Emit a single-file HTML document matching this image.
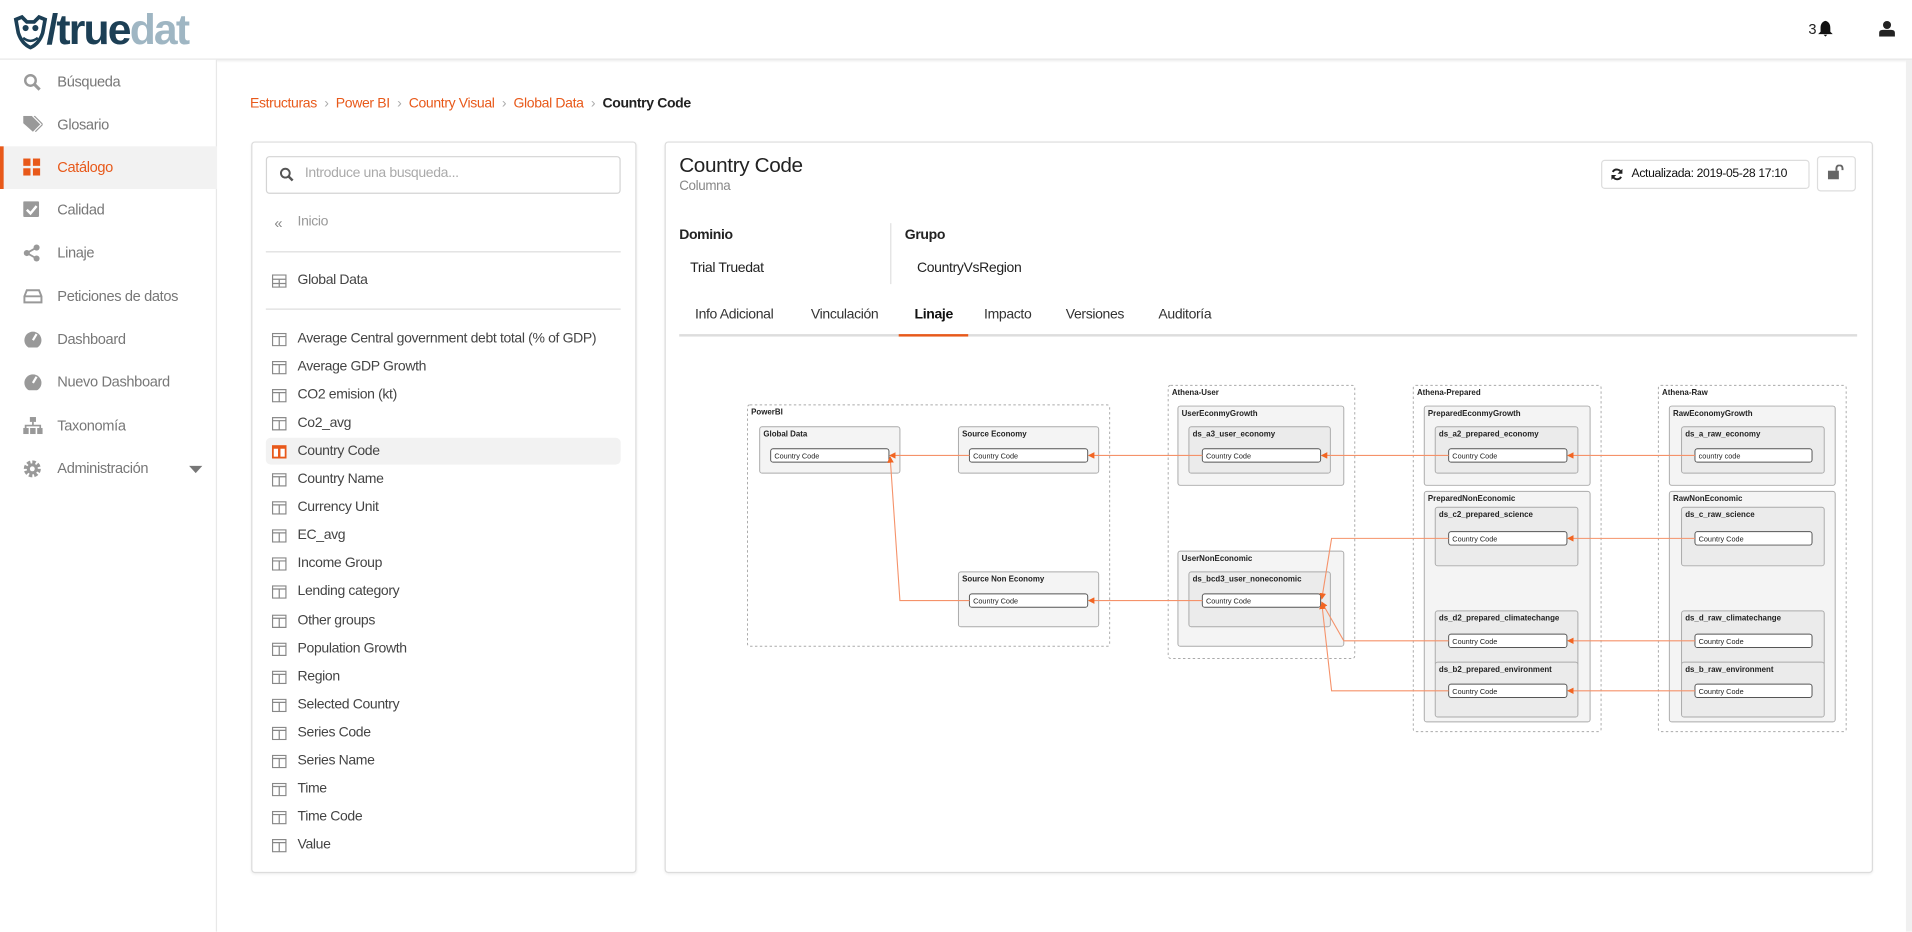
<!DOCTYPE html>
<html><head><meta charset="utf-8"><style>
*{box-sizing:border-box;margin:0;padding:0}
html,body{width:1912px;height:931px;overflow:hidden;background:#fff;font-family:"Liberation Sans",sans-serif}
#w{position:absolute;left:0;top:0;width:1568px;height:763.5px;transform:scale(1.2194);transform-origin:0 0;letter-spacing:-.3px}
.a{position:absolute;white-space:nowrap}
.hdr{left:0;top:0;width:1568px;height:49px;background:#fff;border-bottom:1px solid #e6e6e6;box-shadow:0 1px 2px rgba(0,0,0,.08)}
.side{left:0;top:49px;width:178px;height:715px;border-right:1px solid #e8e8e8;background:#fff}
.si{position:absolute;left:0;width:178px;height:35px;font-size:12px;color:#777;line-height:35px;padding-left:47px}
.si svg{position:absolute;left:19px;top:10px}
.si.act{background:#f2f2f2;color:#e8591a;border-left:3px solid #e8591a;padding-left:44px}
.si.act svg{left:16px}
.bc{left:205px;top:79px;font-size:11.5px;color:#e8591a}
.bc span.s{color:#aaa;margin:0 6px}
.bc b{color:#222;font-weight:bold}
.panel{border:1px solid #dcdcdc;border-radius:3px;background:#fff;box-shadow:0 1px 2px rgba(0,0,0,.06)}
.li{position:absolute;left:218px;width:291px;height:22px;font-size:11.5px;color:#444;line-height:22px;padding-left:26px;white-space:nowrap}
.li svg{position:absolute;left:5px;top:6px}
.li.act{background:#f2f2f2;border-radius:4px}
.tab{position:absolute;top:252px;font-size:11.5px;color:#333}
</style></head><body><div id="w">
<div class="a hdr"></div>
<svg class="a" style="left:10px;top:11px" width="30" height="30" viewBox="0 0 30 30"><path d="M3 5 L8 3 L12 7 L18 7 L22 3 L27 5 L25 16 Q22 25 15 28 Q8 25 5 16 Z" fill="none" stroke="#1c3f55" stroke-width="3"/><circle cx="11" cy="12" r="2.5" fill="#1c3f55"/><circle cx="19" cy="12" r="2.5" fill="#1c3f55"/><path d="M9 20 Q15 25 21 20" stroke="#1c3f55" stroke-width="2" fill="none"/></svg>
<div class="a" style="left:38px;top:6px;font-size:35px;font-weight:bold;letter-spacing:-1.5px;color:#1c3f55;line-height:38px">/true<span style="color:#9fb6c3">dat</span></div>
<div class="a" style="left:1483px;top:17px;font-size:12px;color:#222">3</div>
<svg class="a" style="left:1491px;top:17px" width="12" height="13" viewBox="0 0 12 13"><path d="M6 0 C9 1 10 3 10 6 L10 9 L12 11 L0 11 L2 9 L2 6 C2 3 3 1 6 0Z M4.5 11.5 L7.5 11.5 L6 13Z" fill="#111"/></svg>
<svg class="a" style="left:1541px;top:17px" width="13" height="13" viewBox="0 0 13 13"><circle cx="6.5" cy="3.5" r="3.3" fill="#222"/><path d="M0 13 L0 10 Q0 7.5 3 7.5 L10 7.5 Q13 7.5 13 10 L13 13Z" fill="#222"/></svg>
<div class="a" style="left:1563px;top:49px;width:5px;height:715px;background:#f0f0f0"></div>

<div class="a side">
<div class="si" style="top:1px"><svg width="15" height="15" viewBox="0 0 15 15"><circle cx="6" cy="6" r="4.3" stroke="#999" stroke-width="2" fill="none"/><path d="M9 9 L13.5 13.5" stroke="#999" stroke-width="2.5"/></svg>Búsqueda</div>
<div class="si" style="top:36px"><svg width="16" height="15" viewBox="0 0 16 15"><path d="M0 0 L7 0 L14 7 L8 13 L0 6Z" fill="#999"/><path d="M9 0 L16 7 L10 13" stroke="#999" fill="none"/></svg>Glosario</div>
<div class="si act" style="top:71px"><svg width="14" height="14" viewBox="0 0 14 14" fill="#e8591a"><rect width="6" height="6"/><rect x="8" width="6" height="6"/><rect y="8" width="6" height="6"/><rect x="8" y="8" width="6" height="6"/></svg>Catálogo</div>
<div class="si" style="top:106px"><svg width="14" height="14" viewBox="0 0 14 14"><rect width="13" height="13" rx="1" fill="#999"/><path d="M3 7 L6 10 L11 4" stroke="#fff" stroke-width="2" fill="none"/></svg>Calidad</div>
<div class="si" style="top:141px"><svg width="14" height="15" viewBox="0 0 14 15" fill="#999"><circle cx="11" cy="3" r="2.5"/><circle cx="3" cy="7.5" r="2.5"/><circle cx="11" cy="12" r="2.5"/><path d="M11 3 L3 7.5 L11 12" stroke="#999" stroke-width="1.5" fill="none"/></svg>Linaje</div>
<div class="si" style="top:177px"><svg width="16" height="14" viewBox="0 0 16 14"><path d="M1 7 L3 2 L13 2 L15 7 L15 12 L1 12Z" stroke="#999" stroke-width="1.6" fill="none"/><path d="M1 7 L15 7" stroke="#999" stroke-width="1.5"/></svg>Peticiones de datos</div>
<div class="si" style="top:212px"><svg width="16" height="14" viewBox="0 0 16 14"><circle cx="8" cy="8" r="7" fill="#999"/><path d="M8 8 L11 3" stroke="#fff" stroke-width="1.8"/></svg>Dashboard</div>
<div class="si" style="top:247px"><svg width="16" height="14" viewBox="0 0 16 14"><circle cx="8" cy="8" r="7" fill="#999"/><path d="M8 8 L11 3" stroke="#fff" stroke-width="1.8"/></svg>Nuevo Dashboard</div>
<div class="si" style="top:283px"><svg width="16" height="14" viewBox="0 0 16 14" fill="#999"><rect x="5.5" y="0" width="5" height="4"/><rect x="0" y="9" width="4.5" height="5"/><rect x="5.7" y="9" width="4.5" height="5"/><rect x="11.5" y="9" width="4.5" height="5"/><path d="M8 4 V7 M2 9 V7 H14 V9" stroke="#999" stroke-width="1.4" fill="none"/></svg>Taxonomía</div>
<div class="si" style="top:318px"><svg width="15" height="15" viewBox="0 0 15 15"><circle cx="7.5" cy="7.5" r="5" fill="none" stroke="#999" stroke-width="4" stroke-dasharray="2.5 1.4"/><circle cx="7.5" cy="7.5" r="4.5" fill="#999"/><circle cx="7.5" cy="7.5" r="2" fill="#fff"/></svg>Administración<svg style="left:155px;top:15px" width="11" height="6" viewBox="0 0 11 6"><path d="M0 0 L11 0 L5.5 6Z" fill="#777"/></svg></div>
</div>

<div class="a bc">Estructuras<span class="s">›</span>Power BI<span class="s">›</span>Country Visual<span class="s">›</span>Global Data<span class="s">›</span><b>Country Code</b></div>

<div class="a panel" style="left:206px;top:116px;width:316px;height:600px"></div>
<div class="a" style="left:218px;top:128px;width:291px;height:31px;border:1px solid #d4d4d4;border-radius:3px"></div>
<svg class="a" style="left:229px;top:137px" width="12" height="12" viewBox="0 0 12 12"><circle cx="5" cy="5" r="3.6" stroke="#555" stroke-width="1.6" fill="none"/><path d="M7.5 7.5 L11 11" stroke="#555" stroke-width="2"/></svg>
<div class="a" style="left:250px;top:136px;font-size:11.5px;color:#aaa">Introduce una busqueda...</div>
<div class="a" style="left:225px;top:176px;font-size:12px;color:#888">«</div>
<div class="a" style="left:244px;top:176px;font-size:11.5px;color:#999">Inicio</div>
<div class="a" style="left:218px;top:206px;width:291px;height:1px;background:#ddd"></div>
<div class="li" style="top:219px"><svg width="12" height="11" viewBox="0 0 12 11"><rect x=".5" y=".5" width="11" height="10" fill="none" stroke="#888"/><path d="M.5 4 H11.5 M.5 7.5 H11.5 M6 4 V10.5" stroke="#888"/></svg>Global Data</div>
<div class="a" style="left:218px;top:253px;width:291px;height:1px;background:#ddd"></div>
<div id="list"></div>

<div class="a panel" style="left:545px;top:116px;width:991px;height:600px"></div>
<div class="a" style="left:557px;top:126px;font-size:17px;color:#222">Country Code</div>
<div class="a" style="left:557px;top:147px;font-size:11px;color:#888">Columna</div>
<div class="a" style="left:1313px;top:131px;width:171px;height:24px;border:1px solid #ddd;border-radius:3px;font-size:10px;color:#111;line-height:22px;padding-left:24px">Actualizada: 2019-05-28 17:10</div>
<svg class="a" style="left:1321px;top:138px" width="10" height="10" viewBox="0 0 10 10"><path d="M8.5 4 A3.7 3.7 0 0 0 1.6 3 M1.5 6 A3.7 3.7 0 0 0 8.4 7" stroke="#222" stroke-width="1.6" fill="none"/><path d="M9.5 0.5 V4.5 H5.5Z M0.5 9.5 V5.5 H4.5Z" fill="#222"/></svg>
<div class="a" style="left:1490px;top:128px;width:32px;height:29px;border:1px solid #ddd;border-radius:3px"></div>
<svg class="a" style="left:1499px;top:135px" width="14" height="13" viewBox="0 0 14 13"><rect x="0" y="5" width="9" height="7" fill="#666"/><path d="M7 5 V3 A2.5 2.5 0 0 1 12 3 V4.5" stroke="#666" stroke-width="1.6" fill="none"/></svg>
<div class="a" style="left:557px;top:187px;font-size:11.5px;font-weight:bold;color:#222">Dominio</div>
<div class="a" style="left:742px;top:187px;font-size:11.5px;font-weight:bold;color:#222">Grupo</div>
<div class="a" style="left:566px;top:214px;font-size:11.5px;color:#222">Trial Truedat</div>
<div class="a" style="left:752px;top:214px;font-size:11.5px;color:#222">CountryVsRegion</div>
<div class="a" style="left:730px;top:183px;width:1px;height:50px;background:#e0e0e0"></div>
<div class="tab" style="left:570px">Info Adicional</div>
<div class="tab" style="left:665px">Vinculación</div>
<div class="tab" style="left:750px;font-weight:bold;color:#111">Linaje</div>
<div class="tab" style="left:807px">Impacto</div>
<div class="tab" style="left:874px">Versiones</div>
<div class="tab" style="left:950px">Auditoría</div>
<div class="a" style="left:557px;top:274px;width:966px;height:2px;background:#ddd"></div>
<div class="a" style="left:737px;top:274px;width:57px;height:2px;background:#e8591a"></div>

<svg class="a" style="left:0;top:0;letter-spacing:0" width="1568" height="763" viewBox="0 0 1568 763" font-family="Liberation Sans, sans-serif">
<defs><marker id="ar" markerWidth="6" markerHeight="6" refX="5" refY="3" orient="auto"><path d="M0 0 L6 3 L0 6Z" fill="#f26522"/></marker></defs>
<g id="dg"></g>
</svg>
</div>
<script>
var L=["Average Central government debt total (% of GDP)","Average GDP Growth","CO2 emision (kt)","Co2_avg","Country Code","Country Name","Currency Unit","EC_avg","Income Group","Lending category","Other groups","Population Growth","Region","Selected Country","Series Code","Series Name","Time","Time Code","Value"];
var h="";L.forEach(function(t,i){var y=267+i*23.05;var c=i==4?"#e8591a":"#888";h+='<div class="li'+(i==4?' act':'')+'" style="top:'+y+'px"><svg width="12" height="11" viewBox="0 0 12 11"><rect x=".5" y=".5" width="11" height="10" fill="'+(i==4?'#e8591a':'none')+'" stroke="'+c+'"/><rect x="1.5" y="3" width="3.5" height="6.5" fill="#fff" opacity="'+(i==4?1:0)+'"/><rect x="7" y="3" width="3.5" height="6.5" fill="#fff" opacity="'+(i==4?1:0)+'"/><path d="M.5 3 H11.5 M6 3 V10.5" stroke="'+c+'" stroke-opacity="'+(i==4?0:1)+'"/></svg>'+t+'</div>'});
document.getElementById("list").innerHTML=h;
var s="";
function dash(x1,x2,y1,y2,t){s+='<rect x="'+x1+'" y="'+y1+'" width="'+(x2-x1)+'" height="'+(y2-y1)+'" rx="2" fill="none" stroke="#aaa" stroke-width=".8" stroke-dasharray="2 2"/><text x="'+(x1+3)+'" y="'+(y1+8)+'" font-size="6.5" font-weight="bold" fill="#222">'+t+'</text>';}
function box(x1,x2,y1,y2,t,f){s+='<rect x="'+x1+'" y="'+y1+'" width="'+(x2-x1)+'" height="'+(y2-y1)+'" rx="2" fill="'+(f||"#f4f4f4")+'" stroke="#aaa" stroke-width=".8"/><text x="'+(x1+3)+'" y="'+(y1+8)+'" font-size="6.5" font-weight="bold" fill="#222">'+t+'</text>';}
function fld(x1,x2,y,t){s+='<rect x="'+x1+'" y="'+y+'" width="'+(x2-x1)+'" height="11" rx="2" fill="#fff" stroke="#555" stroke-width=".8"/><text x="'+(x1+3)+'" y="'+(y+8)+'" font-size="6" fill="#222">'+(t||"Country Code")+'</text>';}
function ln(p){s+='<polyline points="'+p+'" fill="none" stroke="#f5926a" stroke-width=".9" marker-end="url(#ar)"/>';}
dash(613,910,332,530,"PowerBI");
box(623,738,350,388,"Global Data");fld(632,729,368);
box(786,901,350,388,"Source Economy");fld(795,892,368);
box(786,901,469,514,"Source Non Economy");fld(795,892,487);
dash(958,1111,316,540,"Athena-User");
box(966,1102,333,398,"UserEconmyGrowth");box(975,1091,350,388,"ds_a3_user_economy","#ebebeb");fld(986,1083,368);
box(966,1102,452,530,"UserNonEconomic");box(975,1091,469,514,"ds_bcd3_user_noneconomic","#ebebeb");fld(986,1083,487);
[[1159,1313,1168,1304,1177,1294,1188,1285,"Athena-Prepared","PreparedEconmyGrowth","PreparedNonEconomic",["ds_a2_prepared_economy","ds_c2_prepared_science","ds_d2_prepared_climatechange","ds_b2_prepared_environment"]],
[1360,1514,1369,1505,1379,1496,1390,1486,"Athena-Raw","RawEconomyGrowth","RawNonEconomic",["ds_a_raw_economy","ds_c_raw_science","ds_d_raw_climatechange","ds_b_raw_environment"]]].forEach(function(c,k){
dash(c[0],c[1],316,600,c[8]);box(c[2],c[3],333,398,c[9]);box(c[2],c[3],403,592,c[10]);
box(c[4],c[5],350,388,c[11][0],"#ebebeb");fld(c[6],c[7],368,k?"country code":0);
box(c[4],c[5],416,464,c[11][1],"#ebebeb");fld(c[6],c[7],436);
box(c[4],c[5],501,546,c[11][2],"#ebebeb");fld(c[6],c[7],520);
box(c[4],c[5],543,588,c[11][3],"#ebebeb");fld(c[6],c[7],561);});
ln("795,373.5 730,373.5");ln("795,492.5 738,492.5 730,375");
ln("986,373.5 893,373.5");ln("986,492.5 893,492.5");
ln("1188,373.5 1084,373.5");ln("1188,441.5 1092,441.5 1084,491");ln("1188,525.5 1102,525.5 1084,494");ln("1188,566.5 1092,566.5 1084,495");
[373.5,441.5,525.5,566.5].forEach(function(y){ln("1390,"+y+" 1286,"+y)});
document.getElementById("dg").innerHTML=s;
</script>
</body></html>
